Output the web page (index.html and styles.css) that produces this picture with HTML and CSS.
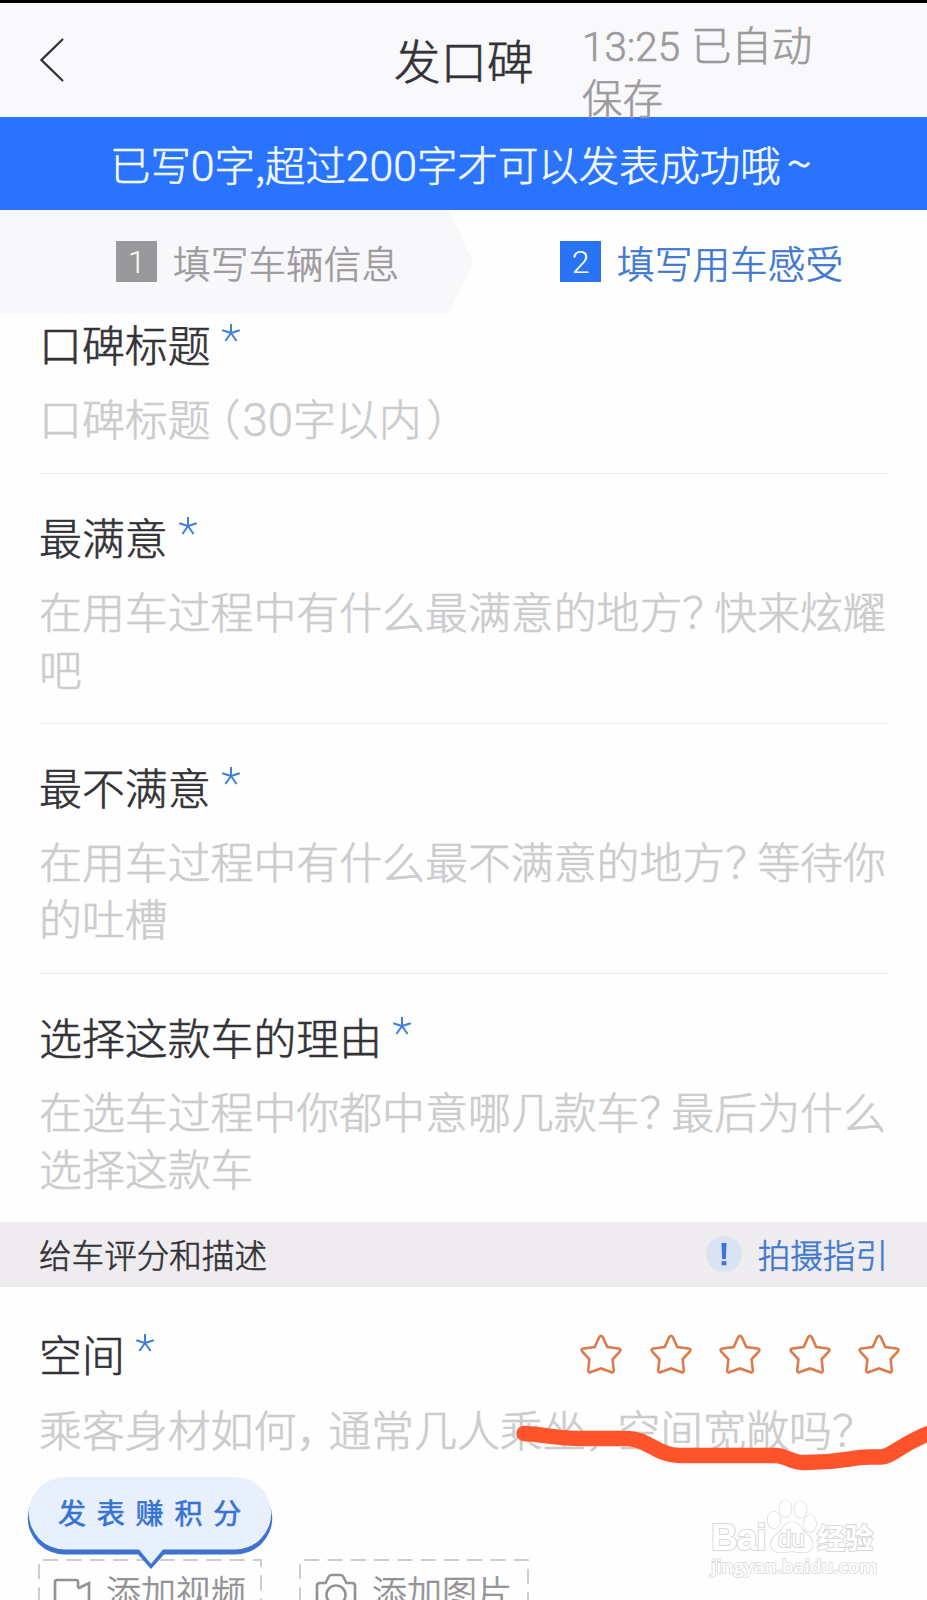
FILE: index.html
```html
<!DOCTYPE html>
<html lang="zh-CN">
<head>
    <meta charset="UTF-8">
    <title>发口碑</title>
    <link rel="stylesheet" href="styles.css">
</head>
<body>
    <header class="header">
        <svg class="back" viewBox="0 0 24 44"><path d="M23 1 L1.5 22 L23 43"/></svg>
        <h1>发口碑</h1>
        <p class="saved"><span class="time">13:25</span> 已自动<br>保存</p>
    </header>

    <div class="banner"><p>已写<span class="num">0</span>字<span class="comma">,</span>超过<span class="num">200</span>字才可以发表成功哦<span class="tilde">~</span></p></div>

    <nav class="steps">
        <div class="step step-done"><span class="step-nr">1</span>填写车辆信息</div>
        <div class="step step-active"><span class="step-nr">2</span>填写用车感受</div>
    </nav>

    <main>
        <section class="field field-first">
            <h2>口碑标题<svg class="ster" viewBox="0 0 20 20"><path d="M10 10V1M10 10L1.2 7.2M10 10L18.8 7.2M10 10L4.4 18M10 10L15.6 18"/></svg></h2>
            <p class="hint">口碑标题<span class="open">（</span><span class="num">30</span>字以内<span class="close">）</span></p>
        </section>
        <section class="field">
            <h2>最满意<svg class="ster" viewBox="0 0 20 20"><path d="M10 10V1M10 10L1.2 7.2M10 10L18.8 7.2M10 10L4.4 18M10 10L15.6 18"/></svg></h2>
            <p class="hint">在用车过程中有什么最满意的地方<span class="question">？</span>快来炫耀<br>吧</p>
        </section>
        <section class="field">
            <h2>最不满意<svg class="ster" viewBox="0 0 20 20"><path d="M10 10V1M10 10L1.2 7.2M10 10L18.8 7.2M10 10L4.4 18M10 10L15.6 18"/></svg></h2>
            <p class="hint">在用车过程中有什么最不满意的地方<span class="question">？</span>等待你<br>的吐槽</p>
        </section>
        <section class="field field-last">
            <h2>选择这款车的理由<svg class="ster" viewBox="0 0 20 20"><path d="M10 10V1M10 10L1.2 7.2M10 10L18.8 7.2M10 10L4.4 18M10 10L15.6 18"/></svg></h2>
            <p class="hint">在选车过程中你都中意哪几款车<span class="question">？</span>最后为什么<br>选择这款车</p>
        </section>

        <div class="section-bar">
            <span>给车评分和描述</span>
            <a class="guide"><svg viewBox="0 0 36 36"><circle cx="18" cy="18" r="18"/><path d="M15.5 7h5l-.6 16h-3.8zM15.6 25.2h4.8v4h-4.8z"/></svg>拍摄指引</a>
        </div>

        <section class="field field-space">
            <div class="row">
                <h2>空间<svg class="ster" viewBox="0 0 20 20"><path d="M10 10V1M10 10L1.2 7.2M10 10L18.8 7.2M10 10L4.4 18M10 10L15.6 18"/></svg></h2>
                <div class="stars">
                    <svg viewBox="0 0 42 40"><use href="#star"/></svg>
                    <svg viewBox="0 0 42 40"><use href="#star"/></svg>
                    <svg viewBox="0 0 42 40"><use href="#star"/></svg>
                    <svg viewBox="0 0 42 40"><use href="#star"/></svg>
                    <svg viewBox="0 0 42 40"><use href="#star"/></svg>
                </div>
            </div>
            <p class="hint">乘客身材如何<span class="punct">，</span>通常几人乘坐<span class="punct">，</span>空间宽敞吗<span class="question">？</span></p>
            <svg class="scribble" viewBox="0 0 420 60"><path d="M13 21.500C30 22 45 26.500 72 26.500H116C136 26.500 147 43.500 168 43.500H265C275 43.500 280 50.500 292 50.500C330 51 340 45 358 45H370C380 45 390 32 420 20.500"/></svg>
        </section>

        <div class="uploads">
            <div class="upload">
                <svg class="rand" width="224" height="80"><path d="M1 90V1H223V90"/></svg>
                <svg class="icoon" width="38" height="42" viewBox="0 0 38 42"><path d="M25 10V4Q25 2 23 2H4Q2 2 2 4V36H25V27L36 32V5L25 10.500"/></svg>
                添加视频
            </div>
            <div class="upload upload-foto">
                <svg class="rand" width="230" height="80"><path d="M1 90V1H229V90"/></svg>
                <svg class="icoon" width="42" height="42" viewBox="0 0 42 42"><path d="M2 38V13Q2 10 5 10H10.500L13.500 4Q14.500 2 16.500 2H25.500Q27.500 2 28.500 4L31.500 10H37Q40 10 40 13V38"/><circle cx="21" cy="22" r="9.500"/></svg>
                添加图片
            </div>
            <div class="bubble">
                <svg viewBox="0 0 246 94"><path class="bubble-rand" d="M38 5H208A37 36 0 0 1 208 77.500H137L124 92L111 77.500H38A37 36 0 0 1 38 5Z"/><path class="bubble-vlak" d="M38 0H208A36 36 0 0 1 208 72.500H136L124 87L112 72.500H38A36 36 0 0 1 38 0Z"/></svg>
                <span>发表赚积分</span>
            </div>
        </div>
    </main>

    <div class="watermark">
        <div class="logo">
            <span class="bai">Bai</span>
            <svg viewBox="0 0 50 54"><ellipse cx="7" cy="21" rx="6.500" ry="8.500"/><ellipse cx="18.500" cy="9.500" rx="6.200" ry="8.500"/><ellipse cx="33.500" cy="10.500" rx="6.200" ry="8.500"/><ellipse cx="43" cy="24.500" rx="6.200" ry="8.500"/><path d="M25 23C17 23 16 31 9 36C0 42 4 54 13 53.500C19 53.500 20 52.500 25 52.500S31 53.500 37 53.500C46 53.500 49 43 41 36C34 31 33 23 25 23Z"/></svg>
            <span class="du">du</span>
            <span class="jingyan">经验</span>
        </div>
        <p>jingyan.baidu.com</p>
    </div>

    <svg class="defs"><symbol id="star" viewBox="0 0 42 40"><path d="M19.300 3Q21 .5 22.700 3L27.300 13L38.500 14.500Q41.800 15.300 39.500 17.800L32.600 25.300L33.800 36Q33.800 39.500 31 38L21 34.500L11 38Q8.200 39.500 8.200 36L9.400 25.300L2.500 17.800Q.2 15.300 3.500 14.500L14.700 13Z"/></symbol></svg>
</body>
</html>
```
FILE: styles.css
```css
body {
    position: relative;
    box-sizing: border-box;
    width: 927px;
    height: 1600px;
    margin: 0;
    border-top: 3px solid #000;
    background: #fefefe;
    color: #333236;
    font-family: "Noto Sans CJK SC", sans-serif;
    font-weight: 300;
    text-spacing-trim: space-all;
    -webkit-text-stroke: 0.6px currentColor;
    overflow: hidden;
}

h1, h2, p {
    margin: 0;
    font-weight: inherit;
    white-space: nowrap;
}

.header {
    display: flex;
    box-sizing: border-box;
    height: 114px;
    padding-left: 40px;
    background: #f9f8fb;
}

.back {
    width: 24px;
    height: 44px;
    margin-top: 35px;
    fill: none;
    stroke: #333236;
    stroke-width: 2.3;
}

.header h1 {
    width: 188px;
    margin-left: 330px;
    font-size: 46.5px;
    line-height: 112px;
}

.saved {
    padding-top: 14px;
    color: #9c9a9d;
    font-size: 40.4px;
    line-height: 53px;
}

.time,
.num,
.step-nr {
    font-family: Roboto, "Noto Sans CJK SC", sans-serif;
    line-height: 1;
}

.time {
    margin-right: 2px;
}

.banner {
    height: 93px;
    background: #2a73ff;
    color: #f3faff;
    font-size: 40.4px;
    line-height: 93px;
}

.banner p {
    padding-left: 110px;
}

.num {
    font-size: 1.06em;
}

.tilde {
    margin-left: 6px;
    font-size: 1.15em;
    line-height: 1;
}

.steps {
    display: flex;
    height: 103px;
    font-size: 37.7px;
}

.step {
    display: flex;
    flex: none;
    align-items: center;
    box-sizing: border-box;
    width: 473px;
    padding-left: 116px;
    white-space: nowrap;
    line-height: 101px;
    padding-bottom: 1px;
}

.step-nr {
    width: 41px;
    height: 41px;
    margin-right: 16px;
    color: #fff;
    font-size: 32px;
    line-height: 43px;
    text-align: center;
    -webkit-text-stroke: 0;
}

.step-done {
    background: #f8f7fa;
    clip-path: polygon(0 0, 449px 0, 473px 52px, 449px 103px, 0 103px);
    color: #9c9a9d;
}

.step-done .step-nr {
    background: #9a989b;
}

.step-active {
    padding-left: 87px;
    color: #3f78cc;
}

.step-active .step-nr {
    background: #2a73f5;
}

.field {
    margin: 0 39px;
    padding: 32px 0 26px;
    border-bottom: 1px solid #e9e8eb;
    font-size: 42.9px;
}

.field-first {
    padding-top: 0;
}

.field h2 {
    font-size: 42.9px;
    line-height: 60px;
    height: 64px;
}

.ster {
    width: 20px;
    height: 20px;
    margin-left: 10px;
    vertical-align: 19px;
    fill: none;
    stroke: #3f7fd6;
    stroke-width: 2;
}

.hint {
    margin-top: 12px;
    padding-bottom: 1px;
    color: #cccbcd;
    line-height: 57px;
}

/* narrow full-width punctuation */
.punct {
    letter-spacing: -11px;
}

.open {
    margin-left: -13px;
    letter-spacing: 2px;
}

.close {
    margin-left: 5px;
}

.question {
    letter-spacing: -11px;
}

.field-last {
    padding-bottom: 25px;
    border-bottom: 0;
}

.section-bar {
    display: flex;
    justify-content: space-between;
    height: 65px;
    padding: 0 39px;
    background: #eeecef;
    font-size: 32.6px;
    line-height: 64px;
}

.guide {
    display: flex;
    color: #3f78cc;
}

.guide svg {
    width: 36px;
    height: 36px;
    margin: 14px 16px 0 0;
    fill: #dae3f3;
}

.guide svg path {
    fill: #3f73d6;
}

.field-space {
    position: relative;
    padding-top: 36px;
    padding-bottom: 0;
    border-bottom: 0;
}

.field-space .hint {
    margin-top: 13px;
}

.row {
    display: flex;
    justify-content: space-between;
}

.stars {
    display: flex;
    gap: 27.5px;
    margin: 11px -12px 0 0;
}

.stars svg {
    width: 42px;
    height: 40px;
    fill: none;
    stroke: #dc7b4b;
    stroke-width: 2.6;
}

.scribble {
    position: absolute;
    left: 472px;
    top: 125px;
    width: 420px;
    height: 60px;
    fill: none;
    stroke: #ff532b;
    stroke-width: 15.5;
    stroke-linecap: round;
    overflow: visible;
}

.uploads {
    position: relative;
    display: flex;
    gap: 37px;
    margin: 101px 0 0 38px;
    color: #939195;
    font-size: 35px;
}

.upload {
    position: relative;
    display: flex;
    box-sizing: border-box;
    width: 224px;
    height: 80px;
    padding-left: 15px;
    line-height: 63px;
    white-space: nowrap;
}

.upload-foto {
    width: 230px;
}

.rand {
    position: absolute;
    left: 0;
    top: 0;
    fill: none;
    stroke: #bdbbbe;
    stroke-width: 1.5;
    stroke-dasharray: 15 8.3;
}

.icoon {
    margin: 19px 15px 0 0;
    fill: none;
    stroke: #939195;
    stroke-width: 2.6;
}

.upload-foto .icoon {
    margin: 14px 15px 0 1px;
}

.bubble {
    position: absolute;
    left: -11px;
    top: -82px;
    width: 246px;
    height: 94px;
}

.bubble svg {
    position: absolute;
    inset: 0;
}

.bubble-rand {
    fill: #3d73cf;
}

.bubble-vlak {
    fill: #e8effd;
}

.bubble span {
    position: relative;
    display: block;
    padding-left: 31px;
    color: #3773d3;
    font-size: 28px;
    font-weight: 400;
    line-height: 70px;
    letter-spacing: 10.800px;
}

.watermark {
    position: absolute;
    left: 711px;
    top: 1496px;
    width: 170px;
    color: #fff;
    font-family: "Liberation Sans", "Noto Sans CJK SC", sans-serif;
    font-weight: 700;
    -webkit-text-stroke: 2px #d8d7d9;
    paint-order: stroke fill;
}

.logo {
    display: flex;
    position: relative;
    height: 55px;
}

.logo svg {
    width: 50px;
    height: 54px;
    flex: none;
    fill: #fff;
    stroke: #d2d1d3;
    stroke-width: 1.2;
}

.bai {
    width: 56px;
    font-size: 37px;
    line-height: 78px;
    letter-spacing: -1px;
}

.du {
    position: absolute;
    left: 67px;
    top: 24px;
    font-size: 24px;
    line-height: 32px;
    font-weight: 400;
}

.jingyan {
    font-size: 28px;
    line-height: 82px;
}

.watermark p {
    font-family: "Open Sans", sans-serif;
    font-size: 18.8px;
    font-weight: 600;
    line-height: 24px;
    -webkit-text-stroke-width: 1.6px;
}

.defs {
    position: absolute;
    width: 0;
    height: 0;
}
```
